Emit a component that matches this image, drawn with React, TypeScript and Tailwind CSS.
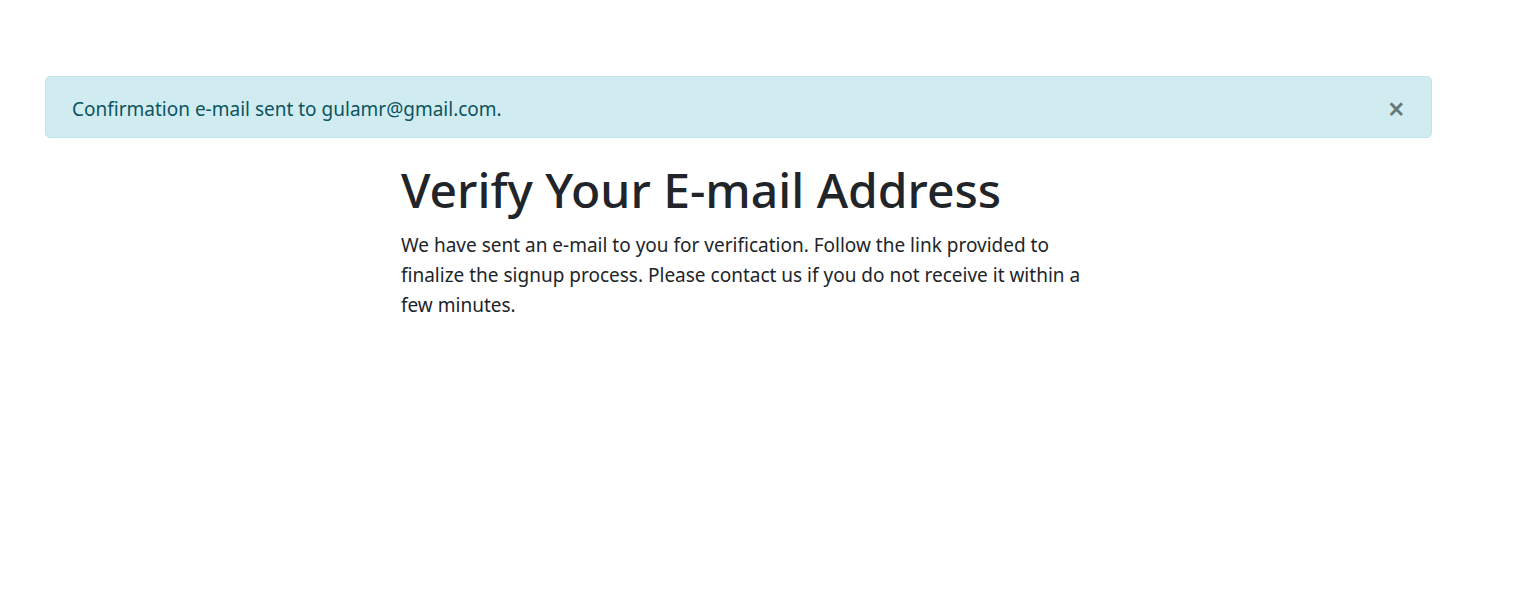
import React, { useState } from 'react';

const App: React.FC = () => {
  const [showAlert, setShowAlert] = useState(true);

  return (
    <div className="min-h-screen bg-white text-[#212529] font-['Noto_Sans',sans-serif]">
      <div className="w-[1387px] ml-[45px] pt-[76px]">
        {showAlert && (
          <div className="flex items-center justify-between h-[62px] rounded-[5px] border border-[#bee5eb] bg-[#d1ecf1] pl-[26px] pr-[25px] pt-[3px] text-[19px] leading-[30px] text-[#0c5460] mb-[20px]">
            <span>Confirmation e-mail sent to gulamr@gmail.com.</span>
            <button
              type="button"
              aria-label="Close"
              onClick={() => setShowAlert(false)}
              className="text-[30px] leading-none font-semibold text-black/50 pr-[1px]"
            >
              ×
            </button>
          </div>
        )}

        <div className="w-[684px] ml-[356px] pt-[2px]">
          {/* Verify page body */}
          <h1 className="text-[48px] leading-[60px] font-medium mb-[10px]">Verify Your E-mail Address</h1>
          <p className="text-[19px] leading-[30px]">
            We have sent an e-mail to you for verification. Follow the link provided to finalize the signup
            process. Please contact us if you do not receive it within a few minutes.
          </p>
        </div>
      </div>
    </div>
  );
};

export default App;
